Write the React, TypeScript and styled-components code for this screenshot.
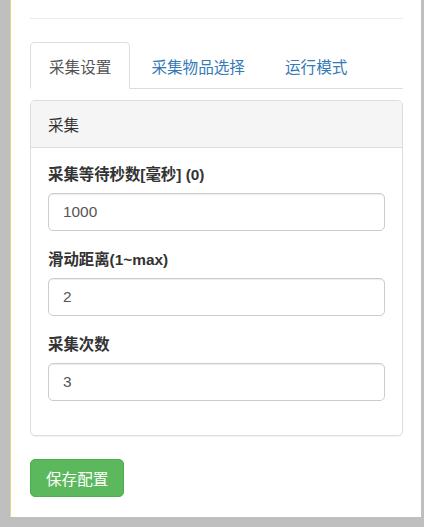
import React from 'react'
import styled, { createGlobalStyle } from 'styled-components'

const GlobalStyle = createGlobalStyle`
  html, body {
    margin: 0;
    padding: 0;
    background: #bfbfbf;
  }
  body {
    font-family: "Liberation Sans", "Noto Sans CJK SC", sans-serif;
    color: #333;
  }
  * { box-sizing: border-box; }
`

const Page = styled.div`
  height: 527px;
  padding-left: 10px;
  padding-right: 3px;
`

const Dialog = styled.div`
  height: 517px;
  background: #fff;
  border-left: 1px solid #e8d77a;
  padding: 0 18px 0 19px;
`

const Header = styled.div`
  height: 19px;
  border-bottom: 1px solid #ececec;
`

const Body = styled.div`
  padding-top: 23px;
`

const Tabs = styled.ul`
  list-style: none;
  margin: 0;
  padding: 0;
  display: flex;
  border-bottom: 1px solid #ddd;
`

const Tab = styled.li<{ $active?: boolean }>`
  margin-right: 2px;
  margin-bottom: -1px;
  height: 47px;
  padding: 0 18px;
  display: flex;
  align-items: center;
  font-size: 15.6px;
  border: 1px solid ${p => (p.$active ? '#ddd' : 'transparent')};
  border-bottom-color: ${p => (p.$active ? '#fff' : 'transparent')};
  border-radius: 5px 5px 0 0;
  background: ${p => (p.$active ? '#fff' : 'transparent')};
  color: ${p => (p.$active ? '#555' : '#337ab7')};
`

const Panel = styled.div`
  margin-top: 11px;
  border: 1px solid #ddd;
  border-radius: 5px;
  box-shadow: 0 1px 1px rgba(0, 0, 0, 0.05);
`

const PanelHeading = styled.div`
  height: 47px;
  padding: 0 17px;
  display: flex;
  align-items: center;
  background: #f5f5f5;
  border-bottom: 1px solid #ddd;
  border-radius: 4px 4px 0 0;
  font-size: 15.6px;
  color: #333;
`

const PanelBody = styled.div`
  padding: 16px 17px 16px 17px;
`

const FormGroup = styled.div`
  margin-bottom: 18px;
`

const Label = styled.label`
  display: block;
  font-weight: bold;
  font-size: 15.4px;
  line-height: 22px;
  margin-bottom: 7px;
  color: #333;
`

const Input = styled.input`
  display: block;
  width: 100%;
  height: 38px;
  padding: 0 14px;
  font-family: inherit;
  font-size: 15.4px;
  color: #555;
  border: 1px solid #ccc;
  border-radius: 5px;
  box-shadow: inset 0 1px 1px rgba(0, 0, 0, 0.075);
  outline: none;
`

const SaveButton = styled.button`
  margin-top: 23px;
  height: 38px;
  padding: 0 15px;
  font-family: inherit;
  font-size: 15.6px;
  color: #fff;
  background: #5cb85c;
  border: 1px solid #4cae4c;
  border-radius: 5px;
`

const fields = [
  { label: '采集等待秒数[毫秒] (0)', value: '1000' },
  { label: '滑动距离(1~max)', value: '2' },
  { label: '采集次数', value: '3' },
]

export default function App() {
  return (
    <>
      <GlobalStyle />
      <Page>
        <Dialog>
          <Header />
          <Body>
            <Tabs>
              <Tab $active>采集设置</Tab>
              <Tab>采集物品选择</Tab>
              <Tab>运行模式</Tab>
            </Tabs>
            <Panel>
              <PanelHeading>采集</PanelHeading>
              <PanelBody>
                {fields.map(f => (
                  <FormGroup key={f.label}>
                    <Label>{f.label}</Label>
                    <Input defaultValue={f.value} />
                  </FormGroup>
                ))}
              </PanelBody>
            </Panel>
            <SaveButton>保存配置</SaveButton>
          </Body>
        </Dialog>
      </Page>
    </>
  )
}
